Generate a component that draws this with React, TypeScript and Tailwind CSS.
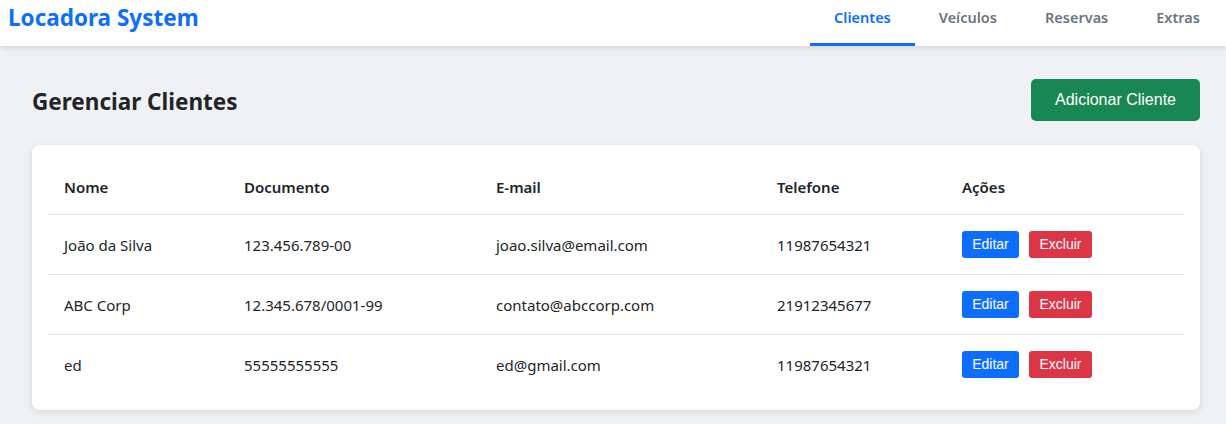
import React from "react";

const rows = [
  { nome: "João da Silva", doc: "123.456.789-00", email: "joao.silva@email.com", tel: "11987654321" },
  { nome: "ABC Corp", doc: "12.345.678/0001-99", email: "contato@abccorp.com", tel: "21912345677" },
  { nome: "ed", doc: "55555555555", email: "ed@gmail.com", tel: "11987654321" },
];

export default function App() {
  return (
    <div className="min-h-[424px] bg-[#f0f1f5] font-['Noto_Sans',sans-serif] text-[#212529]">
      <header className="relative z-10 flex h-[46px] items-start justify-between bg-white pl-2 pr-[2px] shadow-[0_2px_6px_rgba(0,0,0,0.12)]">
        <div className="pt-[3px] text-[22.5px] font-bold leading-[30px] text-[#0d6efd]">Locadora System</div>
        <nav className="flex h-full">
          {["Clientes", "Veículos", "Reservas", "Extras"].map((t, i) => (
            <div
              key={t}
              className={
                "flex h-full items-start px-6 pt-[5px] text-[14.5px] font-semibold leading-[24px] border-b-[3px] " +
                (i === 0 ? "border-[#0d6efd] text-[#0d6efd]" : "border-transparent text-[#6c757d]")
              }
            >
              {t}
            </div>
          ))}
        </nav>
      </header>
      <main className="pl-8 pr-[26px] pt-[33px]">
        <div className="flex h-[42px] items-center justify-between">
          <h1 className="mt-[4px] text-[22.5px] font-bold leading-[38px] text-[#212529]">Gerenciar Clientes</h1>
          <button className="h-[42px] w-[169px] rounded-[5px] bg-[#198754] font-['Liberation_Sans',Arial,sans-serif] text-[16px] text-white">
            Adicionar Cliente
          </button>
        </div>
        <div className="mt-6 rounded-lg bg-white p-4 shadow-[0_2px_8px_rgba(0,0,0,0.1)]">
          <table className="w-full border-collapse text-left text-[15px]">
            <thead>
              <tr className="border-b border-[#dee2e6]">
                <th className="w-[180px] px-4 pt-4 pb-4 font-semibold leading-[21px]">Nome</th>
                <th className="w-[252px] px-4 pt-4 pb-4 font-semibold leading-[21px]">Documento</th>
                <th className="w-[281px] px-4 pt-4 pb-4 font-semibold leading-[21px]">E-mail</th>
                <th className="w-[185px] px-4 pt-4 pb-4 font-semibold leading-[21px]">Telefone</th>
                <th className="px-4 pt-4 pb-4 font-semibold leading-[21px]">Ações</th>
              </tr>
            </thead>
            <tbody>
              {rows.map((r, i) => (
                <tr key={i} className={i < rows.length - 1 ? "border-b border-[#dee2e6]" : ""}>
                  <td className="px-4 pt-[17px] pb-[15px] leading-[27px]">{r.nome}</td>
                  <td className="px-4 pt-[17px] pb-[15px] leading-[27px]">{r.doc}</td>
                  <td className="px-4 pt-[17px] pb-[15px] leading-[27px]">{r.email}</td>
                  <td className="px-4 pt-[17px] pb-[15px] leading-[27px]">{r.tel}</td>
                  <td className="px-4 pt-4 pb-4">
                    <div className="flex gap-[10px] font-['Liberation_Sans',Arial,sans-serif]">
                      <button className="h-[27px] w-[57px] rounded-[3px] bg-[#0d6efd] text-[14px] text-white">Editar</button>
                      <button className="h-[27px] w-[63px] rounded-[3px] bg-[#dc3545] text-[14px] text-white">Excluir</button>
                    </div>
                  </td>
                </tr>
              ))}
            </tbody>
          </table>
        </div>
      </main>
    </div>
  );
}
